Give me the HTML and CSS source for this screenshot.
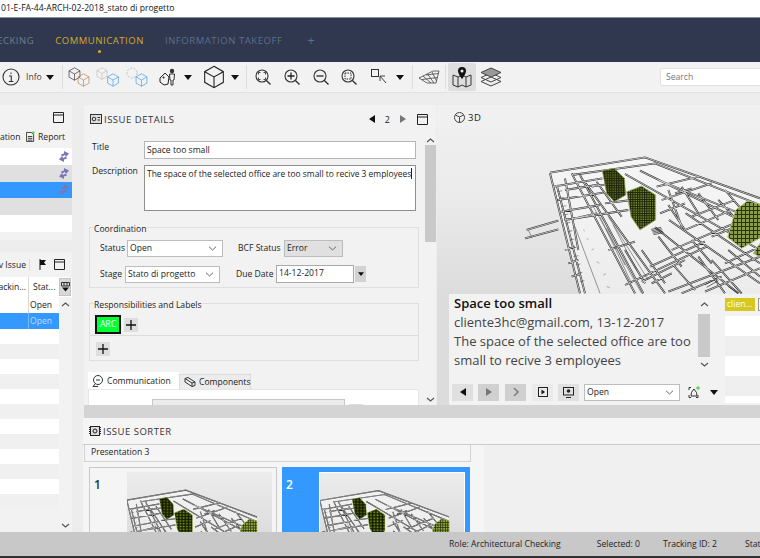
FILE: index.html
```html
<!DOCTYPE html>
<html lang="it">
<head>
<meta charset="utf-8">
<title>Issue details</title>
<link rel="stylesheet" href="styles.css">
</head>
<body>
<svg class="defs" width="0" height="0" aria-hidden="true">
  <defs>
    <symbol id="caret" viewBox="0 0 8 5"><path d="M0 0H8L4 5Z" fill="#111"/></symbol>
    <symbol id="chev" viewBox="0 0 9 5"><path d="M1 .7L4.5 4 8 .7" fill="none" stroke="#666" stroke-width="1"/></symbol>
    <symbol id="up" viewBox="0 0 9 5"><path d="M1 4L4.5 1 8 4" fill="none" stroke="#555" stroke-width="1.2"/></symbol>
    <symbol id="max" viewBox="0 0 11 11"><path d="M.5.5H10.5V10.5H.5ZM.5 3H10.5" fill="none" stroke="#222"/></symbol>
    <symbol id="cube" viewBox="0 0 16 18"><path d="M8 1L15 5V13L8 17 1 13V5ZM1 5L8 9 15 5M8 9V17" fill="none" stroke="currentColor" stroke-width=".8"/></symbol>
    <symbol id="lens" viewBox="0 0 16 16"><circle cx="7" cy="7" r="6" fill="none" stroke="#333" stroke-width="1.1"/><path d="M11.4 11.4L15.5 15.5" stroke="#333" stroke-width="1.4"/></symbol>
    <symbol id="sync" viewBox="0 0 12 13"><path d="M6 1L11 3.500 8 7 7 5 4 6.500 3 4.500 6 3.500ZM6 12L1 9.500 4 6 5 8 8 6.500 9 8.500 6 9.500Z" fill="#7878b8"/></symbol>
    <symbol id="plus" viewBox="0 0 10 10"><path d="M5 0V10M0 5H10" stroke="#111" stroke-width="1.3"/></symbol>
    <pattern id="vox" width="7" height="7" patternUnits="userSpaceOnUse"><rect width="7" height="7" fill="#7f9632"/><path d="M0 1.500H7M1.500 0V7" stroke="#1c220a" stroke-width="3.300"/></pattern>
    <pattern id="voxlight" width="12" height="12" patternUnits="userSpaceOnUse"><rect width="12" height="12" fill="#8ba04a"/><path d="M0 1.500H12M1.500 0V12" stroke="#2c3312" stroke-width="3.500"/></pattern>
    <path id="walls" d="M75 68L360 22 705 145M75 70L165 430M95 105L180 430M140 70L330 430M165 75L355 430M182 100L420 430M85 110L232 85M98 150L235 128M108 185L225 165M118 210L310 180M5 240L100 212M0 265L100 238M140 75L390 40 705 165M300 72L705 300M345 62L705 240M400 90L705 215M390 232L640 430M432 210L705 400M482 190L705 340M350 395L480 330M300 405L545 290M375 350L540 275M440 300L640 215M480 240L620 180M500 200L630 150M410 150L560 100M395 110L520 80M430 425L705 320M540 425L705 355M560 330L650 430M610 300L705 380M470 430L590 380M120 300L150 290M130 340L160 330M140 380L165 372M430 165L480 240M520 130L580 210M580 150L640 215M500 270L560 340M445 345L510 420M120 120L215 105M200 110L300 95M240 160L320 150M150 205L215 190M215 95L290 200M120 85L160 300M430 120L470 230M470 110L520 190M600 120L660 190M350 300L420 400M300 300L360 400M405 190L480 160M450 130L500 115M560 260L705 200M600 340L705 290M640 270L705 245M520 320L600 430M400 260L470 350M250 300L330 275M380 400L440 370"/>
    <symbol id="model" viewBox="437 105 323 189" preserveAspectRatio="none">
      <g transform="translate(525 150) scale(.3333)">
        <path class="floor" d="M75 68L360 22 705 145V435H165Z"/>
        <use href="#walls" class="wallout"/>
        <use href="#walls" class="wallin"/>
        <path class="thin" d="M150 230L225 430M205 170L350 430M225 200L320 400M250 200L370 390M10 240L20 262M245 235L300 345M265 225L335 360M98 125L112 122M103 145L117 142M110 170L124 167M116 195L130 192M122 220L136 217M128 245L142 242M134 270L148 267M140 295L154 292M146 320L160 317M152 345L166 342M158 370L172 367M164 395L178 392"/>
        <path class="patch" d="M378 238L408 232M380 242L410 236M382 246L412 240M384 250L414 244M386 254L416 248M540 405L575 385M545 412L580 392M610 410L640 430"/>
        <path class="marks" d="M185 265l5 5M200 300l6-4M215 335l8 5M235 375l8-4M245 410l9 3M175 240l4 3"/>
        <g class="blocks">
          <polygon points="232,62 268,55 298,85 302,135 268,155 245,130"/>
          <polygon class="dim" points="232,62 268,55 298,85 302,135 268,155 245,130"/>
          <polygon points="305,125 350,108 392,135 392,210 345,240 318,200"/>
          <polygon class="pale" points="632,180 668,152 712,165 712,260 650,295 608,262"/>
          <polygon class="pale" points="685,310 705,280 712,325"/>
        </g>
      </g>
    </symbol>
  </defs>
</svg>

<div class="window">
  <header class="titlebar"><span class="titletext">01-E-FA-44-ARCH-02-2018_stato di progetto</span></header>

  <nav class="tabsbar">
    <span class="tabitem clipped">CHECKING</span>
    <span class="tabitem active">COMMUNICATION</span>
    <span class="tabitem">INFORMATION TAKEOFF</span>
    <span class="tabplus">+</span>
  </nav>

  <div class="toolbar">
    <svg class="ml2" width="18" height="18" viewBox="0 0 18 18"><circle cx="9" cy="9" r="8" fill="none" stroke="#333" stroke-width="1.1"/><path d="M9 4.500v1.500M7 8h2.300v5M6.800 13.500h4.600" fill="none" stroke="#333" stroke-width="1.1"/></svg>
    <span class="infolabel ml6">Info</span>
    <svg class="ml4" width="8" height="5"><use href="#caret"/></svg>
    <i class="sep ml8"></i>
    <svg class="ml5" width="23" height="20" viewBox="0 0 23 20"><use href="#cube" x="0" y="0" width="13" height="14" class="ink"/><use href="#cube" x="9" y="6" width="13" height="14" class="brown"/></svg>
    <svg class="ml5" width="24" height="20" viewBox="0 0 24 20"><use href="#cube" x="0" y="0" width="12" height="13" class="grey"/><use href="#cube" x="10" y="6" width="14" height="14" class="blue"/></svg>
    <svg class="ml6" width="22" height="20" viewBox="0 0 22 20"><circle cx="6" cy="6" r="5" fill="none" stroke="#bbb" stroke-dasharray="2 1.500"/><use href="#cube" x="9" y="6" width="13" height="14" class="blue"/></svg>
    <svg class="ml11" width="18" height="18" viewBox="0 0 18 18"><path d="M1 10L6 5 10 9 9 16 5 17 1 14Z" fill="none" stroke="#222"/><circle cx="4.500" cy="9.500" r="1" fill="#222"/><circle cx="13" cy="3" r="2.200" fill="#333"/><path d="M10.500 6H15.500L15 12H14V17H12V12H11Z" fill="none" stroke="#333"/></svg>
    <svg class="ml7" width="8" height="5"><use href="#caret"/></svg>
    <svg class="ml11 ink" width="22" height="24"><use href="#cube" width="22" height="24"/></svg>
    <svg class="ml6" width="8" height="5"><use href="#caret"/></svg>
    <i class="sep ml7"></i>
    <svg class="ml8" width="16" height="16" viewBox="0 0 16 16"><use href="#lens" width="16" height="16"/><path d="M3.500 5.500V3.500H5.500M8.500 3.500H10.500V5.500M10.500 8.500V10.500H8.500M5.500 10.500H3.500V8.500" fill="none" stroke="#333" stroke-width=".9"/></svg>
    <svg class="ml13" width="16" height="16" viewBox="0 0 16 16"><use href="#lens" width="16" height="16"/><path d="M7 3.500V10.500M3.500 7H10.500" stroke="#222" stroke-width="1.300"/></svg>
    <svg class="ml13" width="16" height="16" viewBox="0 0 16 16"><use href="#lens" width="16" height="16"/><path d="M3.500 7H10.500" stroke="#222" stroke-width="1.300"/></svg>
    <svg class="ml12" width="16" height="16" viewBox="0 0 16 16"><use href="#lens" width="16" height="16"/><rect x="4" y="4" width="6" height="6" fill="none" stroke="#333" stroke-dasharray="1.500 1"/></svg>
    <svg class="ml14" width="16" height="16" viewBox="0 0 16 16"><rect x=".5" y=".5" width="7" height="7" fill="none" stroke="#333"/><path d="M9 7L15 14M9 7V12M9 7H14" fill="none" stroke="#444"/></svg>
    <svg class="ml9" width="8" height="5"><use href="#caret"/></svg>
    <i class="sep ml8"></i>
    <svg class="ml5" width="22" height="14" viewBox="0 0 22 14"><path d="M1 8L15 1H21L18 13H9ZM5 6L13 13M9.500 4L16 13M14 2L18.500 11M4 9.500L19.500 7.500M8 5L20.500 3.500" fill="none" stroke="#444" stroke-width=".8"/></svg>
    <i class="sep ml5"></i>
    <div class="activetool ml2">
      <svg width="20" height="22" viewBox="0 0 20 22"><path d="M1 9L6 11 10 9 14 11 19 9V19L14 21 10 19 6 21 1 19ZM6 11V21M14 11V21" fill="none" stroke="#333"/><path d="M10 1A4 4 0 0 1 14 5C14 8 10 13 10 13S6 8 6 5A4 4 0 0 1 10 1Z" fill="#111"/><circle cx="10" cy="5" r="1.500" fill="#eee"/></svg>
    </div>
    <svg class="ml4" width="22" height="20" viewBox="0 0 22 20"><path d="M11 10L1 14.500 11 19 21 14.500ZM11 6L1 10.500 11 15 21 10.500Z" fill="#eee" stroke="#444"/><path d="M11 1L1 5.500 11 10 21 5.500Z" fill="#999" stroke="#444"/></svg>
    <div class="search">Search</div>
  </div>

  <main class="workspace">
    <aside class="leftcol">
      <section class="leftpanel toppanel">
        <div class="panelcontrols"><svg width="11" height="11"><use href="#max"/></svg></div>
        <div class="lefttools">
          <span>ation</span>
          <svg width="9" height="11" viewBox="0 0 10 12"><path d="M.5 1.500H6L8.500 4V11.500H.5ZM2 6H7M2 8H7M2 10H7" fill="none" stroke="#333"/><path d="M8 0V4M6 2H10" stroke="#3c3"/></svg>
          <span>Report</span>
        </div>
        <div class="row plain"><svg width="12" height="13"><use href="#sync"/></svg></div>
        <div class="row shaded"><svg width="12" height="13"><use href="#sync"/></svg></div>
        <div class="row picked"><svg width="12" height="13"><use href="#sync"/></svg></div>
        <div class="row shaded"></div>
        <div class="row plain"></div>
      </section>

      <section class="leftpanel bottompanel">
        <div class="issuetools">
          <span>v Issue</span>
          <i class="sep"></i>
          <svg width="8" height="11" viewBox="0 0 8 11"><path d="M1 0V11" stroke="#111"/><path d="M1 1H7L5 3.500 7 6H1Z" fill="#111"/></svg>
          <svg width="11" height="11"><use href="#max"/></svg>
        </div>
        <div class="gridhead">
          <span class="cola">ackin...</span>
          <span class="colb">Stat...</span>
          <span class="filterbtn"><svg width="9" height="10" viewBox="0 0 9 10"><path d="M.5.500H8.500V4H.5ZM3 .5V4M6 .5V4" fill="none" stroke="#333"/><path d="M1 5.500H8L4.500 9.500Z" fill="#111"/></svg></span>
        </div>
        <div class="gridbody">
          <div class="gridrows">
            <div class="grow tall"><span class="cola"></span><span class="colb">Open</span></div>
            <div class="grow tall sel"><span class="cola"></span><span class="colb">Open</span></div>
            <div class="grow"></div>
            <div class="grow alt"></div>
            <div class="grow"></div>
            <div class="grow alt"></div>
            <div class="grow"></div>
            <div class="grow alt"></div>
            <div class="grow"></div>
            <div class="grow alt"></div>
            <div class="grow"></div>
            <div class="grow alt"></div>
            <div class="grow"></div>
            <div class="grow alt"></div>
          </div>
          <div class="gridscroll">
            <svg width="9" height="5"><use href="#up"/></svg>
            <svg class="flip" width="9" height="5"><use href="#up"/></svg>
          </div>
        </div>
      </section>
    </aside>

    <div class="rightcol">
      <div class="toprow">
        <section class="details">
          <div class="detailshead">
            <svg width="12" height="10" viewBox="0 0 12 10"><rect x=".5" y=".5" width="11" height="9" fill="#ddd" stroke="#333"/><circle cx="4" cy="5" r="1.800" fill="none" stroke="#333"/><path d="M7.500 3.500H10M7.500 6H10" stroke="#333"/></svg>
            <span class="paneltitle">ISSUE DETAILS</span>
            <span class="pager">
              <svg width="6" height="8" viewBox="0 0 6 8"><path d="M6 0V8L0 4Z" fill="#111"/></svg>
              <span>2</span>
              <svg width="6" height="8" viewBox="0 0 6 8"><path d="M0 0V8L6 4Z" fill="#777"/></svg>
              <svg width="11" height="11"><use href="#max"/></svg>
            </span>
          </div>
          <div class="detailsbody">
            <div class="form">
              <div class="field titlefield"><label>Title</label><div class="box">Space too small</div></div>
              <div class="field descfield"><label>Description</label><div class="box area"><span class="caretend">The space of the selected office are too small to recive 3 employees</span></div></div>

              <div class="group coord">
                <span class="legend">Coordination</span>
                <div class="formrow statusrow">
                  <span class="lab1">Status</span>
                  <div class="select w96">Open<svg width="9" height="5"><use href="#chev"/></svg></div>
                  <span class="lab2">BCF Status</span>
                  <div class="select dimmed w59">Error<svg width="9" height="5"><use href="#chev"/></svg></div>
                </div>
                <div class="formrow stagerow">
                  <span class="lab1b">Stage</span>
                  <div class="select w95">Stato di progetto<svg width="9" height="5"><use href="#chev"/></svg></div>
                  <span class="lab3">Due Date</span>
                  <div class="dateinput">14-12-2017</div>
                  <span class="datebtn"><svg width="6" height="4"><use href="#caret"/></svg></span>
                </div>
              </div>

              <div class="group resp">
                <span class="legend">Responsibilities and Labels</span>
                <div class="chips"><span class="chip">ARC</span><span class="addbtn"><svg width="10" height="10"><use href="#plus"/></svg></span></div>
                <div class="chips second"><span class="addbtn"><svg width="10" height="10"><use href="#plus"/></svg></span></div>
              </div>

              <div class="tabs">
                <span class="tab on"><svg width="12" height="12" viewBox="0 0 12 12"><circle cx="6" cy="5" r="4.500" fill="none" stroke="#333"/><path d="M3 9L1 11.500H6M4 5H8" fill="none" stroke="#333"/></svg>Communication</span>
                <span class="tab"><svg width="12" height="10" viewBox="0 0 12 10"><path d="M1 1.500L4 .5 11 5V8.500L8 9.500 1 5ZM1 1.500L8 6V9.500M8 6L11 5" fill="none" stroke="#333"/></svg>Components</span>
              </div>
              <div class="tabbody">
                <div class="viewport"></div>
                <span class="tinybtn"></span>
              </div>
            </div>
            <div class="vscroll">
              <svg width="9" height="5"><use href="#up"/></svg>
              <div class="thumb"></div>
              <svg class="flip" width="9" height="5"><use href="#up"/></svg>
            </div>
          </div>
        </section>

        <section class="viewer">
          <div class="viewlabel"><svg width="11" height="11" viewBox="0 0 11 11"><circle cx="5.500" cy="5.500" r="5" fill="none" stroke="#444"/><path d="M1.500 3L5.500 5 9.500 3M5.500 5V10.500" fill="none" stroke="#444"/></svg>3D</div>
          <svg class="scene" viewBox="437 105 323 189" preserveAspectRatio="none"><use href="#model" x="437" y="105" width="323" height="189"/></svg>
          <div class="viewfoot">
            <div class="issuecard">
              <div class="cardtop">
                <div class="cardtext">
                  <strong>Space too small</strong>
                  <p>cliente3hc@gmail.com, 13-12-2017</p>
                  <p>The space of the selected office are too small to recive 3 employees</p>
                </div>
                <div class="cardscroll">
                  <svg width="9" height="5"><use href="#up"/></svg>
                  <div class="cardthumb"></div>
                  <svg class="flip" width="9" height="5"><use href="#up"/></svg>
                </div>
              </div>
              <div class="cardtools">
                <span class="cbtn"><svg width="6" height="8" viewBox="0 0 6 8"><path d="M6 0V8L0 4Z" fill="#111"/></svg></span>
                <span class="cbtn off"><svg width="6" height="8" viewBox="0 0 6 8"><path d="M0 0V8L6 4Z" fill="#777"/></svg></span>
                <span class="cbtn off"><svg width="6" height="8" viewBox="0 0 6 8"><path d="M1 0L5 4 1 8" fill="none" stroke="#777" stroke-width="1.400"/></svg></span>
                <span class="cbtn outlined"><svg width="10" height="10" viewBox="0 0 10 10"><rect x=".5" y=".5" width="9" height="9" fill="none" stroke="#222"/><path d="M3.500 2.500V7.500L7 5Z" fill="#111"/></svg></span>
                <span class="cbtn"><svg width="11" height="11" viewBox="0 0 11 11"><rect x=".5" y=".5" width="10" height="7.500" fill="none" stroke="#222"/><circle cx="5.500" cy="4" r="1.800" fill="#222"/><path d="M3 10.500H8" stroke="#222"/></svg></span>
                <div class="select cardselect">Open<svg width="9" height="5"><use href="#chev"/></svg></div>
                <svg class="addview" width="13" height="13" viewBox="0 0 13 13"><path d="M1 4V1.500H3M1 9V11.500H3M8 11.500H10V9M3 10L3.500 6.500 6 3 8.500 6.500 9 10Z" fill="none" stroke="#333"/><path d="M10 0V4M8 2H12" stroke="#3c3"/></svg>
                <svg width="8" height="5"><use href="#caret"/></svg>
              </div>
            </div>
            <div class="sidelist">
              <div class="sidechips"><span class="yellowchip">clien...</span><span class="emptychip"></span></div>
              <div class="sr"></div><div class="sr alt"></div><div class="sr"></div><div class="sr alt"></div><div class="sr last"></div>
            </div>
          </div>
        </section>
      </div>

      <section class="sorter">
        <div class="sorterhead">
          <svg width="12" height="10" viewBox="0 0 12 10"><rect x="1.500" y=".5" width="9" height="9" fill="#ddd" stroke="#222"/><circle cx="6" cy="5" r="2" fill="none" stroke="#222"/><path d="M.5 1V9M11.500 1V9" stroke="#222" stroke-dasharray="1 1"/></svg>
          <span class="paneltitle">ISSUE SORTER</span>
        </div>
        <div class="sorterbody">
          <div class="slides">
            <div class="slidehead">Presentation 3</div>
            <div class="cards">
              <div class="card"><span class="num">1</span><div class="shot"><svg viewBox="550 130 234 121" preserveAspectRatio="none"><use href="#model" x="437" y="105" width="323" height="189"/></svg></div></div>
              <div class="card on"><span class="num">2</span><div class="shot"><svg viewBox="550 130 234 121" preserveAspectRatio="none"><use href="#model" x="437" y="105" width="323" height="189"/></svg></div></div>
            </div>
          </div>
          <div class="emptyzone"></div>
        </div>
      </section>
    </div>
  </main>

  <footer class="statusbar">
    <span class="st1">Role: Architectural Checking</span>
    <span class="st2">Selected: 0</span>
    <span class="st3">Tracking ID: 2</span>
    <span class="st4">Status</span>
  </footer>
</div>
</body>
</html>
```

FILE: styles.css
```css
* { box-sizing: border-box; }
html, body { margin: 0; height: 100%; }
body { overflow: hidden; font-family: "Open Sans", "Noto Sans", sans-serif; font-size: 8.600px; color: #222; }
svg { display: block; flex: none; }
.defs { position: absolute; }
.flip { transform: scaleY(-1); }

.window { width: 760px; height: 558px; display: flex; flex-direction: column; overflow: hidden; background: #eee; border-bottom: 2px solid #333; }

.titlebar { height: 18px; flex: none; background: #fff; border-bottom: 1px solid #8a919e; display: flex; align-items: center; padding: 0 0 2px 1px; white-space: nowrap; color: #111; }

.tabsbar { height: 44px; flex: none; background: #2f384f; display: flex; align-items: center; gap: 21px; font-size: 9.500px; letter-spacing: .55px; color: #5f6d8c; white-space: nowrap; }
.tabitem { position: relative; }
.tabitem.clipped { margin-left: -17px; color: #727d90; }
.tabitem.active { color: #d8a92a; }
.tabitem.active::after { content: ""; position: absolute; left: 50%; bottom: -6px; width: 3px; height: 3px; margin-left: -2px; border-radius: 50%; background: #e0ae20; }
.tabplus { margin-left: 4px; font-size: 13px; }

.toolbar { height: 31px; flex: none; display: flex; align-items: center; background: #f2f2f2; border-bottom: 1px solid #e2e2e2; white-space: nowrap; color: #333; }
.infolabel { width: 16px; flex: none; color: #4b3a45; }
.sep { display: block; width: 1px; height: 24px; background: #dcdcdc; flex: none; }
.ink { color: #222; } .brown { color: #a87a50; } .grey { color: #b5b5b5; } .blue { color: #2f9aee; }
.activetool { width: 28px; height: 28px; flex: none; background: #dedede; border-radius: 2px; display: flex; align-items: center; justify-content: center; }
.search { margin-left: 158px; width: 110px; height: 18px; flex: none; background: #fff; border: 1px solid #e2e2e2; border-radius: 2px; padding: 2px 5px; color: #777; }
.ml2 { margin-left: 2px; } .ml4 { margin-left: 4px; } .ml5 { margin-left: 5px; } .ml6 { margin-left: 6px; } .ml7 { margin-left: 7px; } .ml8 { margin-left: 8px; } .ml9 { margin-left: 9px; } .ml11 { margin-left: 11px; } .ml12 { margin-left: 12px; } .ml13 { margin-left: 13px; } .ml14 { margin-left: 14px; }

.workspace { flex: 1; min-height: 0; display: flex; background: #ededed; overflow: hidden; }

.leftcol { width: 72px; flex: none; display: flex; flex-direction: column; gap: 12px; padding-top: 12px; margin-right: 12px; white-space: nowrap; }
.leftpanel { background: #f2f2f2; overflow: hidden; }
.toppanel { height: 135px; flex: none; }
.panelcontrols { height: 24px; display: flex; justify-content: flex-end; align-items: center; padding-right: 8px; }
.lefttools { height: 19px; display: flex; align-items: center; gap: 3px; padding-bottom: 4px; }
.lefttools span:first-child { width: 23px; }
.row { height: 16.800px; display: flex; align-items: center; justify-content: flex-end; padding-right: 2px; }
.plain { background: #fff; } .shaded { background: #e0e0e0; } .picked { background: #3399ff; }

.bottompanel { flex: 1; min-height: 0; display: flex; flex-direction: column; }
.issuetools { height: 25px; flex: none; display: flex; align-items: center; padding-right: 8px; }
.issuetools .sep { height: 12px; margin-left: 3px; }
.issuetools span { width: 26px; flex: none; display: flex; justify-content: flex-end; }
.issuetools svg:nth-of-type(1) { margin-left: 9px; }
.issuetools svg:nth-of-type(2) { margin-left: 7px; }
.gridhead { height: 20px; flex: none; display: flex; align-items: center; background: #fff; }
.cola { width: 29px; flex: none; height: 100%; border-right: 1px solid #d8d8d8; display: flex; align-items: center; justify-content: flex-end; padding-right: 2px; overflow: hidden; }
.colb { width: 30px; flex: none; padding-left: 4px; }
.filterbtn { width: 12px; height: 18px; background: #d8d8d8; border: 1px solid #c4c4c4; display: flex; align-items: center; justify-content: center; flex: none; }
.gridbody { flex: 1; min-height: 0; display: flex; }
.gridrows { width: 59px; flex: none; overflow: hidden; }
.grow { height: 15px; background: #fff; display: flex; align-items: center; }
.grow.alt { background: #f0f0f0; }
.grow.tall { height: 16px; }
.grow.tall .colb { padding-left: 1px; }
.grow.sel { background: #3399ff; color: #b9dcff; }
.grow.sel .cola { border-color: #7ab8f5; }
.gridscroll { flex: 1; display: flex; flex-direction: column; justify-content: space-between; align-items: center; padding: 5px 0 4px; }

.rightcol { flex: 1; min-width: 0; display: flex; flex-direction: column; padding-top: 12px; background: #ededed; }
.toprow { height: 313px; flex: none; display: flex; gap: 1px; border-bottom: 13px solid #d4d4d4; }

.details { width: 352px; flex: none; background: #f2f2f2; display: flex; flex-direction: column; }
.detailshead { height: 30px; flex: none; display: flex; align-items: center; padding: 0 8px 2px 6px; }
.paneltitle { margin-left: 2px; font-size: 9.500px; letter-spacing: .5px; color: #333; }
.pager { margin-left: auto; display: flex; align-items: center; gap: 10px; font-size: 9px; }
.pager svg:last-child { margin-left: 1px; }
.detailsbody { flex: 1; min-height: 0; display: flex; overflow: hidden; }
.form { width: 341px; flex: none; padding: 6px 0 0 4px; overflow: hidden; }
.field { display: flex; }
.field label { width: 56px; flex: none; padding: 0 0 0 4px; }
.titlefield { height: 18px; margin-bottom: 6px; }
.descfield { height: 46px; margin-bottom: 16px; }
.box { width: 272px; height: 18px; background: #fff; border: 1px solid #b5b5b5; padding: 2px; color: #222; white-space: nowrap; line-height: 12px; }
.area { height: 46px; border: 1px solid #8f8f8f; padding-top: 2px; font-size: 8.450px; }
.caretend { border-right: 1px solid #222; }

.group { position: relative; width: 330px; border: 1px solid #dfdfdf; margin-left: 1px; }
.legend { position: absolute; left: 4px; top: -5px; line-height: 12px; background: #f2f2f2; }
.coord { height: 61px; margin-bottom: 15px; padding: 11px 0 0 10px; }
.formrow { display: flex; align-items: center; white-space: nowrap; }
.statusrow { height: 18px; margin-bottom: 8px; }
.stagerow { height: 18px; }
.lab1 { width: 24px; flex: none; }
.lab1b { width: 23px; flex: none; }
.select { height: 17px; background: #fff; border: 1px solid #bcbcbc; display: flex; align-items: center; justify-content: space-between; padding: 0 5px 0 2px; flex: none; }
.select.dimmed { background: #e0e0e0; }
.w96 { width: 96px; margin-left: 3px; }
.w59 { width: 59px; margin-left: 3px; }
.w95 { width: 95px; margin-left: 2px; }
.lab2 { width: 43px; flex: none; margin-left: 15px; }
.lab3 { width: 36px; flex: none; margin-left: 16px; }
.dateinput { width: 78px; height: 18px; margin-left: 4px; background: #fff; border: 1px solid #aaa; padding: 1px 2px; }
.datebtn { width: 11px; height: 16px; margin-left: 1px; background: #d2d2d2; display: flex; align-items: center; justify-content: center; }

.resp { height: 58px; margin-bottom: 11px; }
.chips { display: flex; align-items: center; gap: 3px; padding-left: 5px; }
.resp .chips { height: 21px; margin-top: 10px; }
.resp .chips.second { margin-top: 0; height: 26px; border-top: 1px solid #dcdcdc; padding-left: 6px; }
.chip { width: 26px; height: 19px; background: #00ff33; border: 2px solid #111; color: #fff; text-align: center; line-height: 15px; }
.addbtn { width: 14px; height: 14px; background: #dedede; display: flex; align-items: center; justify-content: center; }

.tabs { display: flex; align-items: flex-end; height: 17px; }
.tab { height: 15px; display: flex; align-items: center; gap: 3px; padding: 0 2px 0 4px; background: #ececec; border: 1px solid #dcdcdc; border-bottom: 0; }
.tab.on { height: 17px; width: 91px; background: #fff; border: 0; }
.tab:last-child { width: 72px; }
.tabbody { width: 331px; height: 40px; background: #fff; border: 1px solid #e6e6e6; display: flex; padding: 9px 0 0 63px; }
.viewport { width: 193px; height: 40px; background: #ececec; border: 1px solid #c8c8c8; }
.tinybtn { width: 14px; height: 12px; margin: 5px 0 0 4px; background: #ddd; }

.vscroll { width: 11px; display: flex; flex-direction: column; align-items: center; padding-top: 3px; background: #f2f2f2; }
.thumb { width: 11px; height: 97px; margin-top: 2px; background: #c9c9c9; flex: none; }
.vscroll svg:last-child { margin-top: auto; margin-bottom: 3px; }

.viewer { flex: 1; min-width: 0; position: relative; display: flex; flex-direction: column; background: linear-gradient(#f1f1f1 0, #ebebeb 90px, #dcdcdc 190px); overflow: hidden; }
.viewlabel { position: absolute; left: 17px; top: 6px; display: flex; align-items: center; gap: 3px; font-size: 9.500px; letter-spacing: .5px; }
.scene { width: 323px; height: 189px; }
.floor { fill: #fff; fill-opacity: .45; }
.wallout { fill: none; stroke: #1f1f1f; stroke-width: 5.500; }
.wallin { fill: none; stroke: #e8e8e8; stroke-width: 2.400; }
.thin { fill: none; stroke: #444; stroke-width: 1.600; }
.patch { fill: none; stroke: #222; stroke-width: 2; }
.marks { fill: none; stroke: #aaa; stroke-width: 3; }
.blocks polygon { fill: url(#vox); stroke: #a9b86a; stroke-width: 2.500; }
.blocks polygon.dim { fill: #20260a; fill-opacity: .3; stroke: none; }
.blocks polygon.pale { fill: url(#voxlight); stroke: #bac682; }

.viewfoot { flex: 1; display: flex; padding-left: 12px; }
.issuecard { width: 276px; flex: none; background: #f2f2f2; display: flex; flex-direction: column; }
.cardtop { height: 85px; display: flex; padding: 0 0 0 5px; }
.cardtext { width: 244px; flex: none; font-size: 13px; line-height: 19px; color: #444; }
.cardtext strong { display: block; font-weight: 600; color: #111; }
.cardtext p { margin: 0; }
.cardscroll { width: 12px; height: 76px; display: flex; flex-direction: column; align-items: center; padding-top: 8px; }
.cardthumb { width: 12px; height: 43px; margin-top: 7px; background: #c9c9c9; flex: none; }
.cardscroll .flip { margin-top: 5px; }
.cardtools { display: flex; align-items: center; padding-left: 3px; height: 20px; margin-top: 3px; }
.cbtn { width: 21px; height: 17px; background: #e0e0e0; display: flex; align-items: center; justify-content: center; margin-right: 5px; flex: none; }
.cbtn.off { background: #d0d0d0; margin-right: 6px; }
.cbtn.outlined { background: #eaeaea; }
.cardselect { width: 96px; }
.addview { margin: 0 9px 0 8px; }
.sidelist { flex: 1; background: #f2f2f2; padding-top: 4px; }
.sidechips { height: 18px; display: flex; gap: 3px; }
.yellowchip { width: 30px; height: 13px; background: #d6c81f; color: #fff; padding-left: 2px; line-height: 13px; }
.emptychip { width: 8px; height: 13px; border: 1px solid #999; }
.sr { height: 20px; background: #fff; }
.sr.alt { background: #efefef; }
.sr.last { height: 7px; }

.sorter { flex: 1; min-height: 0; background: #f5f5f5; display: flex; flex-direction: column; overflow: hidden; margin-left: -1px; }
.sorterhead { height: 27px; flex: none; display: flex; align-items: center; padding-left: 6px; border-bottom: 1px solid #ccc; }
.sorterbody { flex: 1; min-height: 0; display: flex; gap: 7px; }
.slides { width: 394px; flex: none; overflow: hidden; }
.slidehead { width: 387px; height: 17px; margin-left: 1px; border: 1px solid #d2d2d2; border-top: 0; padding-left: 6px; line-height: 15px; }
.cards { display: flex; gap: 5px; padding: 5px 0 0 6px; }
.card { width: 188px; height: 90px; flex: none; border: 1px solid #c9c9c9; display: flex; padding: 4px 4px 0 0; }
.card.on { background: #3399ff; border: 0; color: #fff; padding: 5px 4px 0 0; }
.num { width: 37px; flex: none; padding: 5px 0 0 4px; font-size: 12px; font-weight: 600; line-height: 16px; color: #234; }
.card.on .num { color: #fff; }
.shot { width: 146px; height: 80px; background: linear-gradient(#ececec, #d8d8d8); }
.card.on .shot { border: 1px solid #fff; }
.shot svg { width: 100%; height: 100%; filter: contrast(1.15); }
.emptyzone { flex: 1; background: #f0f0f0; }

.statusbar { height: 24px; flex: none; display: flex; align-items: center; background: #c8c8c8; white-space: nowrap; }
.st1 { margin-left: 449px; }
.st2 { margin-left: 36px; }
.st3 { margin-left: 23px; }
.st4 { margin-left: 28px; }
```
